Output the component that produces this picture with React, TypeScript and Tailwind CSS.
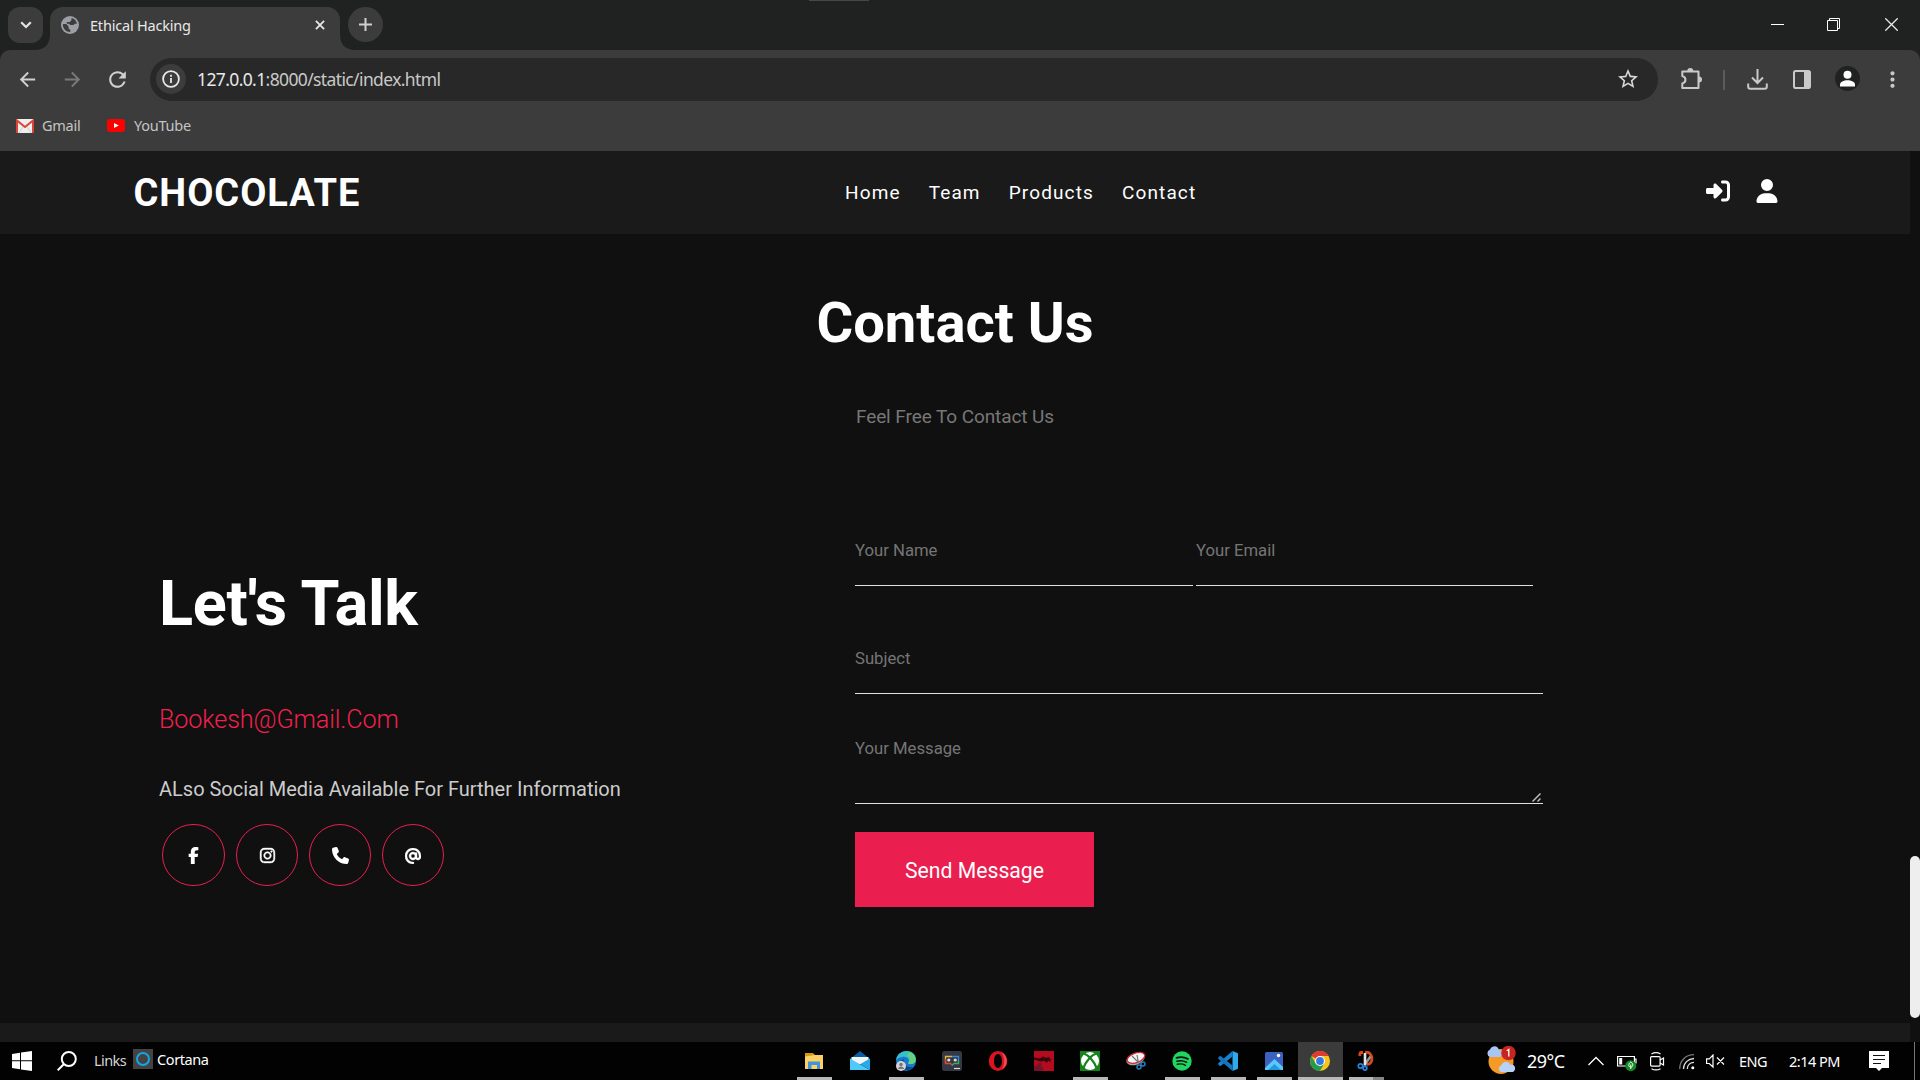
import React from "react";
import { FaAt, FaFacebookF, FaInstagram, FaPhone, FaRightToBracket, FaUser } from "react-icons/fa6";
import { MdArrowBack, MdArrowForward, MdMoreVert, MdRefresh, MdStarBorder } from "react-icons/md";

function TitleBar() {
  return (
    <div className="flex h-[50px] bg-[#202221]">
      <div className="ml-2 mt-[7px] flex h-9 w-[35px] shrink-0 items-center justify-center rounded-[12px] bg-[#3c3c3c]">
        <svg width="12" height="8" viewBox="0 0 12 8" fill="none" stroke="#e3e3e3" strokeWidth="2.2">
          <path d="M1.2 1.2 6 6l4.8-4.8" />
        </svg>
      </div>
      <svg className="mt-[34px] -ml-2 w-[15px] shrink-0" width="15" height="16" viewBox="0 0 15 16">
        <path d="M15 0v16H0c9 0 15-5 15-16Z" fill="#3c3c3c" />
      </svg>
      <div className="mt-[7px] flex h-[43px] w-[290px] shrink-0 rounded-t-[13px] bg-[#3c3c3c]">
        <svg className="ml-[11px] mt-[9px] shrink-0" width="18" height="18" viewBox="0 0 18 18">
          <circle cx="9" cy="9" r="9" fill="#9aa0a6" />
          <path d="M1.900 8h3.300l2.300 2.300v1.900l1.800 1.800v2c-4.200 0-7.700-3.500-7.400-8Z" fill="#3c3c3c" />
          <path d="M10.500 2c3 .700 5 3 5.400 5.700h-2.200L12.600 9H9.300L8 7.700H5.800V5.900h3L10.500 4Z" fill="#3c3c3c" />
        </svg>
        <span className="ml-[11px] mt-[7px] w-[224px] text-[14.500px] leading-[22px] tracking-[-0.200px] text-[#e8e8e8]">Ethical Hacking</span>
        <svg className="mt-[13px] ml-px shrink-0" width="10" height="10" viewBox="0 0 11 11" stroke="#e8e8e8" strokeWidth="2">
          <path d="m1 1 9 9M10 1 1 10" />
        </svg>
      </div>
      <svg className="mt-[34px] shrink-0" width="15" height="16" viewBox="0 0 15 16">
        <path d="M0 0v16h15C6 16 0 11 0 0Z" fill="#3c3c3c" />
      </svg>
      <div className="mt-[7px] -ml-[7px] flex size-[35px] shrink-0 items-center justify-center rounded-full bg-[#3c3c3c]">
        <svg width="13" height="13" viewBox="0 0 13 13" stroke="#d0d0d0" strokeWidth="2">
          <path d="M6.500 0v13M0 6.500h13" />
        </svg>
      </div>
      <div className="ml-[426px] h-px w-[60px] bg-[#474747]" />
      <div className="ml-auto mr-[22px] mt-[18px] flex h-[13px] shrink-0 items-start">
        <svg width="13" height="13" viewBox="0 0 13 13"><path d="M0 6h13v1H0z" fill="#fff" /></svg>
        <svg className="ml-[43px]" width="13" height="13" viewBox="0 0 13 13" fill="none" stroke="#fff">
          <path d="M.5 2.500h10v10H.5zM2.500 2.500v-2h10v10h-2" />
        </svg>
        <svg className="ml-[45px]" width="13" height="13" viewBox="0 0 13 13" stroke="#e8e8e8" strokeWidth="1.300">
          <path d="m.3.300 12.400 12.400M12.700.3.300 12.700" />
        </svg>
      </div>
    </div>
  );
}

function Toolbar() {
  return (
    <div className="bg-[#202221]">
      <div className="h-[101px] rounded-t-[10px] bg-[#3c3c3c] pt-2">
        <div className="flex h-[43px] items-center text-[#c9c9c9]">
          <MdArrowBack className="-mt-px ml-4 size-[23px] shrink-0 text-[#d0d0d0]" />
          <MdArrowForward className="-mt-px ml-[22px] size-[23px] shrink-0 text-[#7a7a7a]" />
          <MdRefresh className="-mt-px ml-[21px] size-[25px] shrink-0 text-[#d0d0d0]" />
          <div className="ml-5 flex h-[43px] w-[1508px] shrink-0 items-center rounded-full bg-[#282828]">
            <div className="-mt-px ml-1.5 flex size-[30px] shrink-0 items-center justify-center rounded-full bg-[#3c3c3c]">
              <svg width="18" height="18" viewBox="0 0 18 18" fill="none" stroke="#e8e8e8" strokeWidth="1.800">
                <circle cx="9" cy="9" r="7.900" />
                <path d="M9 8v5M9 4.800v1.900" />
              </svg>
            </div>
            <span className="-mt-[2px] ml-[11px] text-[17.500px] leading-6 tracking-[-0.620px] text-[#c9c9c9]">
              <span className="text-[#e8e8e8]">127.0.0.1</span>:8000/static/index.html
            </span>
            <MdStarBorder className="-mt-px ml-auto mr-[18px] size-6 text-[#d8d8d8]" />
          </div>
          <svg className="-mt-px ml-[22px] shrink-0" width="23" height="23" viewBox="0 0 23 23">
            <path d="M3 3.500h15.500v4.500M18.500 15v5H2.300v-4.500c4.200-1 4.200-6.500 0-7.500V3.500H4M18.500 7v9" fill="none" stroke="#c9c9c9" strokeWidth="2" strokeLinejoin="round" />
            <path d="M7.300 3a3 3 0 0 1 6 0ZM19 8.500a3 3 0 0 1 0 6Z" fill="#c9c9c9" />
          </svg>
          <div className="ml-5 h-5 w-0.5 shrink-0 bg-[#5c5c5c]" />
          <svg className="-mt-px ml-[22px] shrink-0" width="21" height="21" viewBox="0 0 21 21" fill="none" stroke="#c9c9c9" strokeWidth="2">
            <path d="M10.500 0v13M5 8.500l5.500 5.500L16 8.500M1.200 14.500v3.200q0 2 2 2h14.600q2 0 2-2v-3.200" />
          </svg>
          <svg className="-mt-px ml-[25px] shrink-0" width="18" height="19" viewBox="0 0 18 19">
            <rect x="1" y="1" width="16" height="17" rx="1.800" fill="none" stroke="#c9c9c9" strokeWidth="2" />
            <path d="M11 1h6v17h-6z" fill="#c9c9c9" />
          </svg>
          <svg className="-mt-[2px] ml-6 shrink-0" width="25" height="25" viewBox="0 0 25 25">
            <circle cx="12.500" cy="12.500" r="12.500" fill="#202221" />
            <circle cx="12.500" cy="8.800" r="4" fill="#fff" />
            <path d="M5 20.500v-1.700c0-6 15-6 15 0v1.700Z" fill="#fff" />
          </svg>
          <MdMoreVert className="-mt-px ml-5 size-[25px] shrink-0" />
        </div>
        <div className="mt-[11px] flex h-[26px] items-center text-[14.500px] leading-[22px] tracking-[-0.250px] text-[#c4c4c4]">
          <svg className="ml-4 mt-px shrink-0" width="18" height="14" viewBox="0 0 18 14">
            <rect width="18" height="14" rx="1" fill="#eee" />
            <path d="M3 14 7.500 7M15 14l-4.500-7" stroke="#ccc" strokeWidth="1" />
            <path d="M1 14V1.500L9 8l8-6.500V14" fill="none" stroke="#db4437" strokeWidth="2" />
          </svg>
          <span className="ml-2 w-[41px] tracking-[-0.250px]">Gmail</span>
          <svg className="ml-6 mt-px shrink-0" width="18" height="13" viewBox="0 0 18 13">
            <rect width="18" height="13" rx="3" fill="#f00" />
            <path d="m7 4 4.800 2.500L7 9Z" fill="#fff" />
          </svg>
          <span className="ml-[9px]">YouTube</span>
        </div>
      </div>
    </div>
  );
}

function SiteNav() {
  return (
    <div className="flex h-[83px] items-center bg-[#1a1a1a] text-white">
      <h1 className="ml-[133.500px] w-[711.500px] text-[38px] font-bold leading-[44px] tracking-[0.980px]">CHOCOLATE</h1>
      <nav className="mt-px flex w-[861px] gap-[28px] text-[19px] leading-6 tracking-[1.130px]">
        <span>Home</span>
        <span>Team</span>
        <span>Products</span>
        <span>Contact</span>
      </nav>
      <FaRightToBracket className="-mt-[3px] size-6 shrink-0" />
      <FaUser className="-mt-[3px] ml-[25px] size-6 shrink-0" />
    </div>
  );
}

const socials = [
  { Icon: FaFacebookF, box: "w-[63px]", size: "size-[17px]" },
  { Icon: FaInstagram, box: "w-[62px]", size: "size-[17px] stroke-white stroke-[14]" },
  { Icon: FaPhone, box: "w-[62px]", size: "size-[17px]" },
  { Icon: FaAt, box: "w-[62px]", size: "size-[16px] stroke-white stroke-[14]" },
];

function Contact() {
  return (
    <div className="h-[789px] bg-[#101010] pt-[51px]">
      <h2 className="text-center text-[56.200px] font-bold leading-[76px] text-white">Contact Us</h2>
      <p className="mt-[42px] text-center text-[19px] leading-7 tracking-[-0.080px] text-[#777]">Feel Free To Contact Us</p>
      <div className="flex">
        <section className="ml-[159px] w-[696px] pt-[135px]">
          <h3 className="text-[63px] font-bold leading-[76px] tracking-[-0.300px] text-white">Let's Talk</h3>
          <p className="mt-[62px] text-[25.200px] font-light leading-8 tracking-[-0.120px] text-[#f0204e]">Bookesh@Gmail.Com</p>
          <p className="mt-[39px] text-[20px] leading-7 tracking-[-0.005px] text-[#ccc]">ALso Social Media Available For Further Information</p>
          <div className="ml-[3px] mt-[21px] flex gap-[11px]">
            {socials.map(({ Icon, box, size }, i) => (
              <div key={i} className={`flex h-[62px] items-center justify-center rounded-full border border-[#ea1e4f] pt-px text-white ${box}`}>
                <Icon className={size} />
              </div>
            ))}
          </div>
        </section>
        <form className="w-[688px] pt-[74px] text-[16.700px] leading-5 text-[#757575]">
          <div className="flex gap-[3px]">
            <div className="h-[81px] w-[338px] border-b border-[#e0e0dc] pt-[36px]">Your Name</div>
            <div className="h-[81px] w-[337px] border-b border-[#e0e0dc] pt-[36px]">Your Email</div>
          </div>
          <div className="mt-[27px] h-[81px] border-b border-[#e0e0dc] pt-[36px]">Subject</div>
          <div className="mt-[23px] flex h-[87px] items-end justify-between border-b border-[#e0e0dc]">
            <span className="self-start pt-[22px]">Your Message</span>
            <svg className="mb-px mr-0.5" width="9" height="9" viewBox="0 0 9 9" stroke="#bbb" strokeWidth="1.500">
              <path d="M.5 8.500l8-8M5.500 8.500l3-3" />
            </svg>
          </div>
          <div className="mt-7 flex h-[75px] w-[239px] items-center justify-center bg-[#ea1e4f] pt-0.5 text-[21.200px] text-white">Send Message</div>
        </form>
      </div>
    </div>
  );
}

function Slot({ line, active, children }: { line?: boolean; active?: boolean; children: React.ReactNode }) {
  return (
    <div className={active ? "ml-px flex w-[45px] flex-col items-center bg-[#3b3b3b]" : "flex w-[46px] flex-col items-center"}>
      <svg className={active ? "mt-[9px] mr-px" : "mt-[9px]"} width="20" height="20" viewBox="0 0 20 20">{children}</svg>
      {line && <div className={active ? "mt-[6px] h-[3px] w-full bg-[#b8b8b8]" : "mt-[6px] h-[3px] w-[35px] bg-[#b8b8b8]"} />}
    </div>
  );
}

function TaskIcons() {
  return (
    <>
      <Slot line>
        <path d="M1 2h8l2 2v4H1Z" fill="#d9980e" />
        <path d="M1 5.500 11 4h8v14H1Z" fill="#fbd065" />
        <path d="M4 18v-7.500h12V18h-3v-4H7.500v4Z" fill="#3f95dc" />
      </Slot>
      <Slot>
        <path d="m0 8 10-8 10 8v4H0Z" fill="#0d5ca8" />
        <path d="M1.500 6h17v7h-17Z" fill="#f3f5f6" />
        <path d="M0 19V7.500L20 19Z" fill="#4ec9fa" />
        <path d="M20 19V7.500L10 13.200Z" fill="#29a9e8" />
      </Slot>
      <Slot line>
        <circle cx="10" cy="10" r="10" fill="#1679cf" />
        <path d="M0 9.500C1-3 20-3 20 8.500c0 5-6 5.500-8 3.500 3-4-2-7-6-6-3 .5-5 1.500-6 3.500Z" fill="#35c1c8" />
        <path d="M13 1c7 2 9 10 3 12-1.800.5-4-.4-4-1 3-3 2-6-1-7Z" fill="#66d37b" />
        <path d="M8 8c-2 5 3 9 9 8-4 5-12 4-13-2 0-3 2-5.500 4-6Z" fill="#0d4689" />
        <circle cx="5" cy="15" r="5" fill="#d5d5d5" />
        <circle cx="5" cy="13.500" r="1.800" fill="#777" />
        <path d="M2 18c0-3.500 6-3.500 6 0Z" fill="#777" />
      </Slot>
      <Slot>
        <rect width="20" height="20" rx="2.500" fill="#343845" />
        <path d="M3.500 12V5.500H10" fill="none" stroke="#e5b52f" strokeWidth="1.300" />
        <path d="M10 5.500h6.500V12" fill="none" stroke="#3985db" strokeWidth="1.300" />
        <path d="M3.500 8v4.500h5L10 14" fill="none" stroke="#d8483e" strokeWidth="1.300" />
        <path d="M10 14.500 12 12.500h4.500V9" fill="none" stroke="#3fab55" strokeWidth="1.300" />
        <circle cx="6.800" cy="9" r="1.600" fill="#ddd" />
        <circle cx="13.200" cy="9" r="1.600" fill="#ddd" />
        <path d="M12 17.500h6" stroke="#ddd" strokeWidth="1.200" />
      </Slot>
      <Slot>
        <path fillRule="evenodd" d="M10 0a9.300 10 0 1 0 0 20 9.300 10 0 0 0 0-20Zm0 3c2.300 0 4 3 4 7s-1.700 7-4 7-4-3-4-7 1.700-7 4-7Z" fill="#d9141e" />
        <path d="M13 1c7 3 8 14 1 17 3-4 3-13-1-17Z" fill="#f04a50" />
      </Slot>
      <Slot>
        <path d="M0 0h20v20H0z" fill="#b40b1f" />
        <path d="M0 6.500 6 7.500l3-2 3 1.200 4-.7-1 1.500 3 1-2 .5 1 2-3-1.200-1 2-3-2-3 .7L0 8.500Z" fill="#35060c" />
        <path d="M0 20v-4l3-2 3-3 2 2.500-1 2 3 1.500-2 3Z" fill="#771329" />
      </Slot>
      <Slot line>
        <path d="M0 0h20v20H0z" fill="#15831b" />
        <circle cx="10" cy="10" r="9" fill="#fff" />
        <path d="M3.500 2.500C8 3.500 14 10 16.800 17.500M16.500 2.500C12 3.500 6 10 3.200 17.500" fill="none" stroke="#15831b" strokeWidth="2.200" />
      </Slot>
      <Slot>
        <ellipse cx="9.500" cy="8" rx="9.500" ry="5.800" transform="rotate(-20 9.500 8)" fill="#a7a7a9" />
        <ellipse cx="10" cy="6.800" rx="9.200" ry="4.800" transform="rotate(-20 10 6.800)" fill="#f5f5f5" stroke="#cb282e" strokeWidth="1.300" />
        <path d="m6 5 7 7M11 4l1.500 8" stroke="#777" strokeWidth="1.200" />
        <g fill="none" stroke="#287fc0" strokeWidth="1.500"><circle cx="13" cy="16" r="2" /><circle cx="17" cy="13" r="2" /></g>
      </Slot>
      <Slot line>
        <circle cx="10" cy="10" r="9.700" fill="#1ed760" />
        <g fill="none" stroke="#111" strokeLinecap="round"><path d="M4.500 6.800c4-1.200 8-.8 11.300 1" strokeWidth="1.900" /><path d="M5 10.200c3.500-1 6.700-.5 9.600 1" strokeWidth="1.600" /><path d="M5.300 13.300c3-.8 5.700-.4 8.200 1" strokeWidth="1.400" /></g>
      </Slot>
      <Slot line>
        <path d="m14.500 0 5.500 2.300v15.400L14.500 20Z" fill="#2fa8ee" />
        <path d="M14.500 0v5.500L2.300 15.200.2 13.500v-1.300Z" fill="#1482cf" />
        <path d="M14.500 20v-5.500L2.300 4.800.2 6.500v1.300Z" fill="#1673bd" />
      </Slot>
      <Slot line>
        <rect x="1" y="1" width="18" height="18" rx="1.500" fill="#3b62c0" />
        <path d="m1 17 9.500-9L19 16v3H1Z" fill="#5cc8fa" />
        <path d="m4 19 6.500-6 6.500 6Z" fill="#1d9ce5" />
        <circle cx="14.500" cy="4.500" r="1.700" fill="#fff" />
      </Slot>
      <Slot line active>
        <circle cx="10" cy="10" r="10" fill="#f9c51d" />
        <path d="M10 10 1.340 5A10 10 0 0 1 18.660 5H10Z" fill="#df3b2f" />
        <path d="M1.340 5A10 10 0 0 0 10 20l4.300-7.500L10 10l-4.300 2.500Z" fill="#279b4a" />
        <circle cx="10" cy="10" r="5" fill="#fff" />
        <circle cx="10" cy="10" r="3.900" fill="#3677e8" />
      </Slot>
      <div className="flex w-[46px] flex-col pl-[6px]">
        <svg className="ml-[8px] mt-[9px]" width="20" height="20" viewBox="0 0 20 20" fill="none">
          <path d="M6 1.500H4Q2.500 1.500 3 5M8 1.200c8-1.500 9.500 12 2 12.500" stroke="#d84920" strokeWidth="2.800" />
          <path d="m13.500 5.500-6 8.500" stroke="#999" strokeWidth="2.500" />
          <path d="M8 2v12.500" stroke="#e5e5e5" strokeWidth="2.600" />
          <g stroke="#2784e0" strokeWidth="1.700"><circle cx="3.500" cy="15" r="2.200" /><circle cx="8" cy="17.300" r="1.900" /></g>
        </svg>
        <div className="mt-[6px] flex h-[3px]"><div className="w-6 bg-[#b8b8b8]" /><div className="w-[11px] bg-[#858585]" /></div>
      </div>
    </>
  );
}

function Taskbar() {
  return (
    <div className="flex h-[38px] bg-[#020202] text-white">
      <svg className="ml-3 mt-[9px] shrink-0" width="20" height="20" viewBox="0 0 20 20" fill="#fff">
        <path d="M0 3 8 1.800v7.500H0ZM9 1.600 20 0v9.300H9ZM0 10.300h8v7.900L0 17ZM9 10.300h11V20L9 18.400Z" />
      </svg>
      <svg className="ml-[25px] mt-[9px] shrink-0" width="20" height="20" viewBox="0 0 20 20" fill="none" stroke="#fff" strokeWidth="2">
        <circle cx="11.800" cy="8" r="7" />
        <path d="M7 13 .7 19.300" />
      </svg>
      <span className="ml-[17px] mt-[7px] w-[39px] text-[14.500px] leading-[22px] tracking-[-0.600px] text-[#d5d5d5]">Links</span>
      <div className="mt-[7px] flex size-5 shrink-0 items-center justify-center bg-[#434343]">
        <div className="size-[14px] rounded-full border-2 border-[#14a4e8]" />
      </div>
      <span className="ml-1 mt-[6px] w-[634px] text-[14.500px] leading-[22px] tracking-[-0.400px]">Cortana</span>
      <TaskIcons />
      <svg className="ml-[97px] mt-1 shrink-0" width="31" height="29" viewBox="0 0 31 29">
        <circle cx="15" cy="15.500" r="12.500" fill="#f59a27" />
        <path d="M4 11a4 4 0 0 1 0-7.500C6-1 12-1 13 4c4-1 5 5 1 7Z" fill="#a9c5f4" />
        <path d="M15 26a3.500 3.500 0 0 1 0-6.500c2-5 8-5 9-.8 5-1.200 7 5 3 7.300Z" fill="#b8d1f8" />
        <circle cx="22.500" cy="7" r="7.300" fill="#c7261f" />
        <path d="m20.800 4.800 2-1.300v7" fill="none" stroke="#fff" strokeWidth="1.300" />
      </svg>
      <span className="ml-[10px] mt-[6px] w-[61px] text-[18px] leading-[26px] tracking-[-0.550px]">29°C</span>
      <svg className="mt-[14px] shrink-0" width="16" height="10" viewBox="0 0 16 10" fill="none" stroke="#fff" strokeWidth="1.300"><path d="M.5 9 8 1.500 15.500 9" /></svg>
      <svg className="ml-[13px] mt-[13px] shrink-0" width="20" height="17" viewBox="0 0 20 17" fill="none">
        <path d="M.6 1.500h16.800v9.500H.6ZM18 4h1v4h-1" stroke="#fff" strokeWidth="1.200" />
        <path d="M2.200 3h3v6.500h-3z" fill="#fff" />
        <circle cx="13.800" cy="10.700" r="5.500" fill="#128b24" />
        <path d="M13.800 14V9.500m-2 1c0-2 1-2.800 2-3.500 1 .7 2 1.500 2 3.500s-4 2-4 0Z" stroke="#fff" />
      </svg>
      <svg className="ml-[13px] mt-[10px] shrink-0" width="15" height="19" viewBox="0 0 15 19" fill="none" stroke="#fff" strokeWidth="1.200">
        <rect x=".6" y="4.600" width="9.500" height="9.500" rx="1" /><path d="m10 8 3.500-2v7L10 11M1.500 2c3-1.700 6-1.700 9 0M1.500 16.700c3 1.700 6 1.700 9 0" />
      </svg>
      <svg className="ml-[14px] mt-3 shrink-0" width="16" height="16" viewBox="0 0 16 16" fill="none" strokeWidth="1.300">
        <path d="M.7 15C.7 7 6 1 15 .7" stroke="#777" /><path d="M4.500 15C4.500 9 9 4.800 15 4.500M8.300 15c0-4 3-6.500 6.700-6.700" stroke="#ddd" /><circle cx="13.800" cy="13.800" r="1.500" fill="#fff" />
      </svg>
      <svg className="ml-[11px] mt-3 shrink-0" width="19" height="15" viewBox="0 0 19 15" fill="none" stroke="#fff" strokeWidth="1.200">
        <path d="M.6 4.800h2.700L7 1v12L3.300 9.500H.6ZM11 3.500l7 7M18 3.500l-7 7" />
      </svg>
      <span className="ml-[14px] mt-2 w-[50px] text-[14.500px] leading-[22px] tracking-[-0.500px]">ENG</span>
      <span className="mt-2 w-[80px] text-[14.500px] leading-[22px] tracking-[-0.500px]">2:14 PM</span>
      <svg className="mt-[9px] shrink-0" width="20" height="20" viewBox="0 0 20 20">
        <path d="M0 0h20v17h-7l-3 3-3-3H0Z" fill="#fff" /><path d="M4 4.500h12M4 8.500h12M4 12.500h8" stroke="#111" strokeWidth="1.200" />
      </svg>
      <div className="ml-[25px] w-px shrink-0 bg-[#777]" />
    </div>
  );
}

export default function App() {
  return (
    <div className="h-[1080px] w-[1920px] overflow-hidden whitespace-nowrap bg-[#101010] font-['Noto_Sans',sans-serif]">
      <TitleBar />
      <Toolbar />
      <div className="flex h-[891px] font-[Roboto,sans-serif]">
        <div className="w-[1910px]">
          <SiteNav />
          <Contact />
          <div className="h-[19px] bg-[#1a1a1a]" />
        </div>
        <div className="w-[10px] bg-[#101010] pt-[705px]">
          <div className="h-[162px] rounded-full bg-[#eee]" />
        </div>
      </div>
      <Taskbar />
    </div>
  );
}
